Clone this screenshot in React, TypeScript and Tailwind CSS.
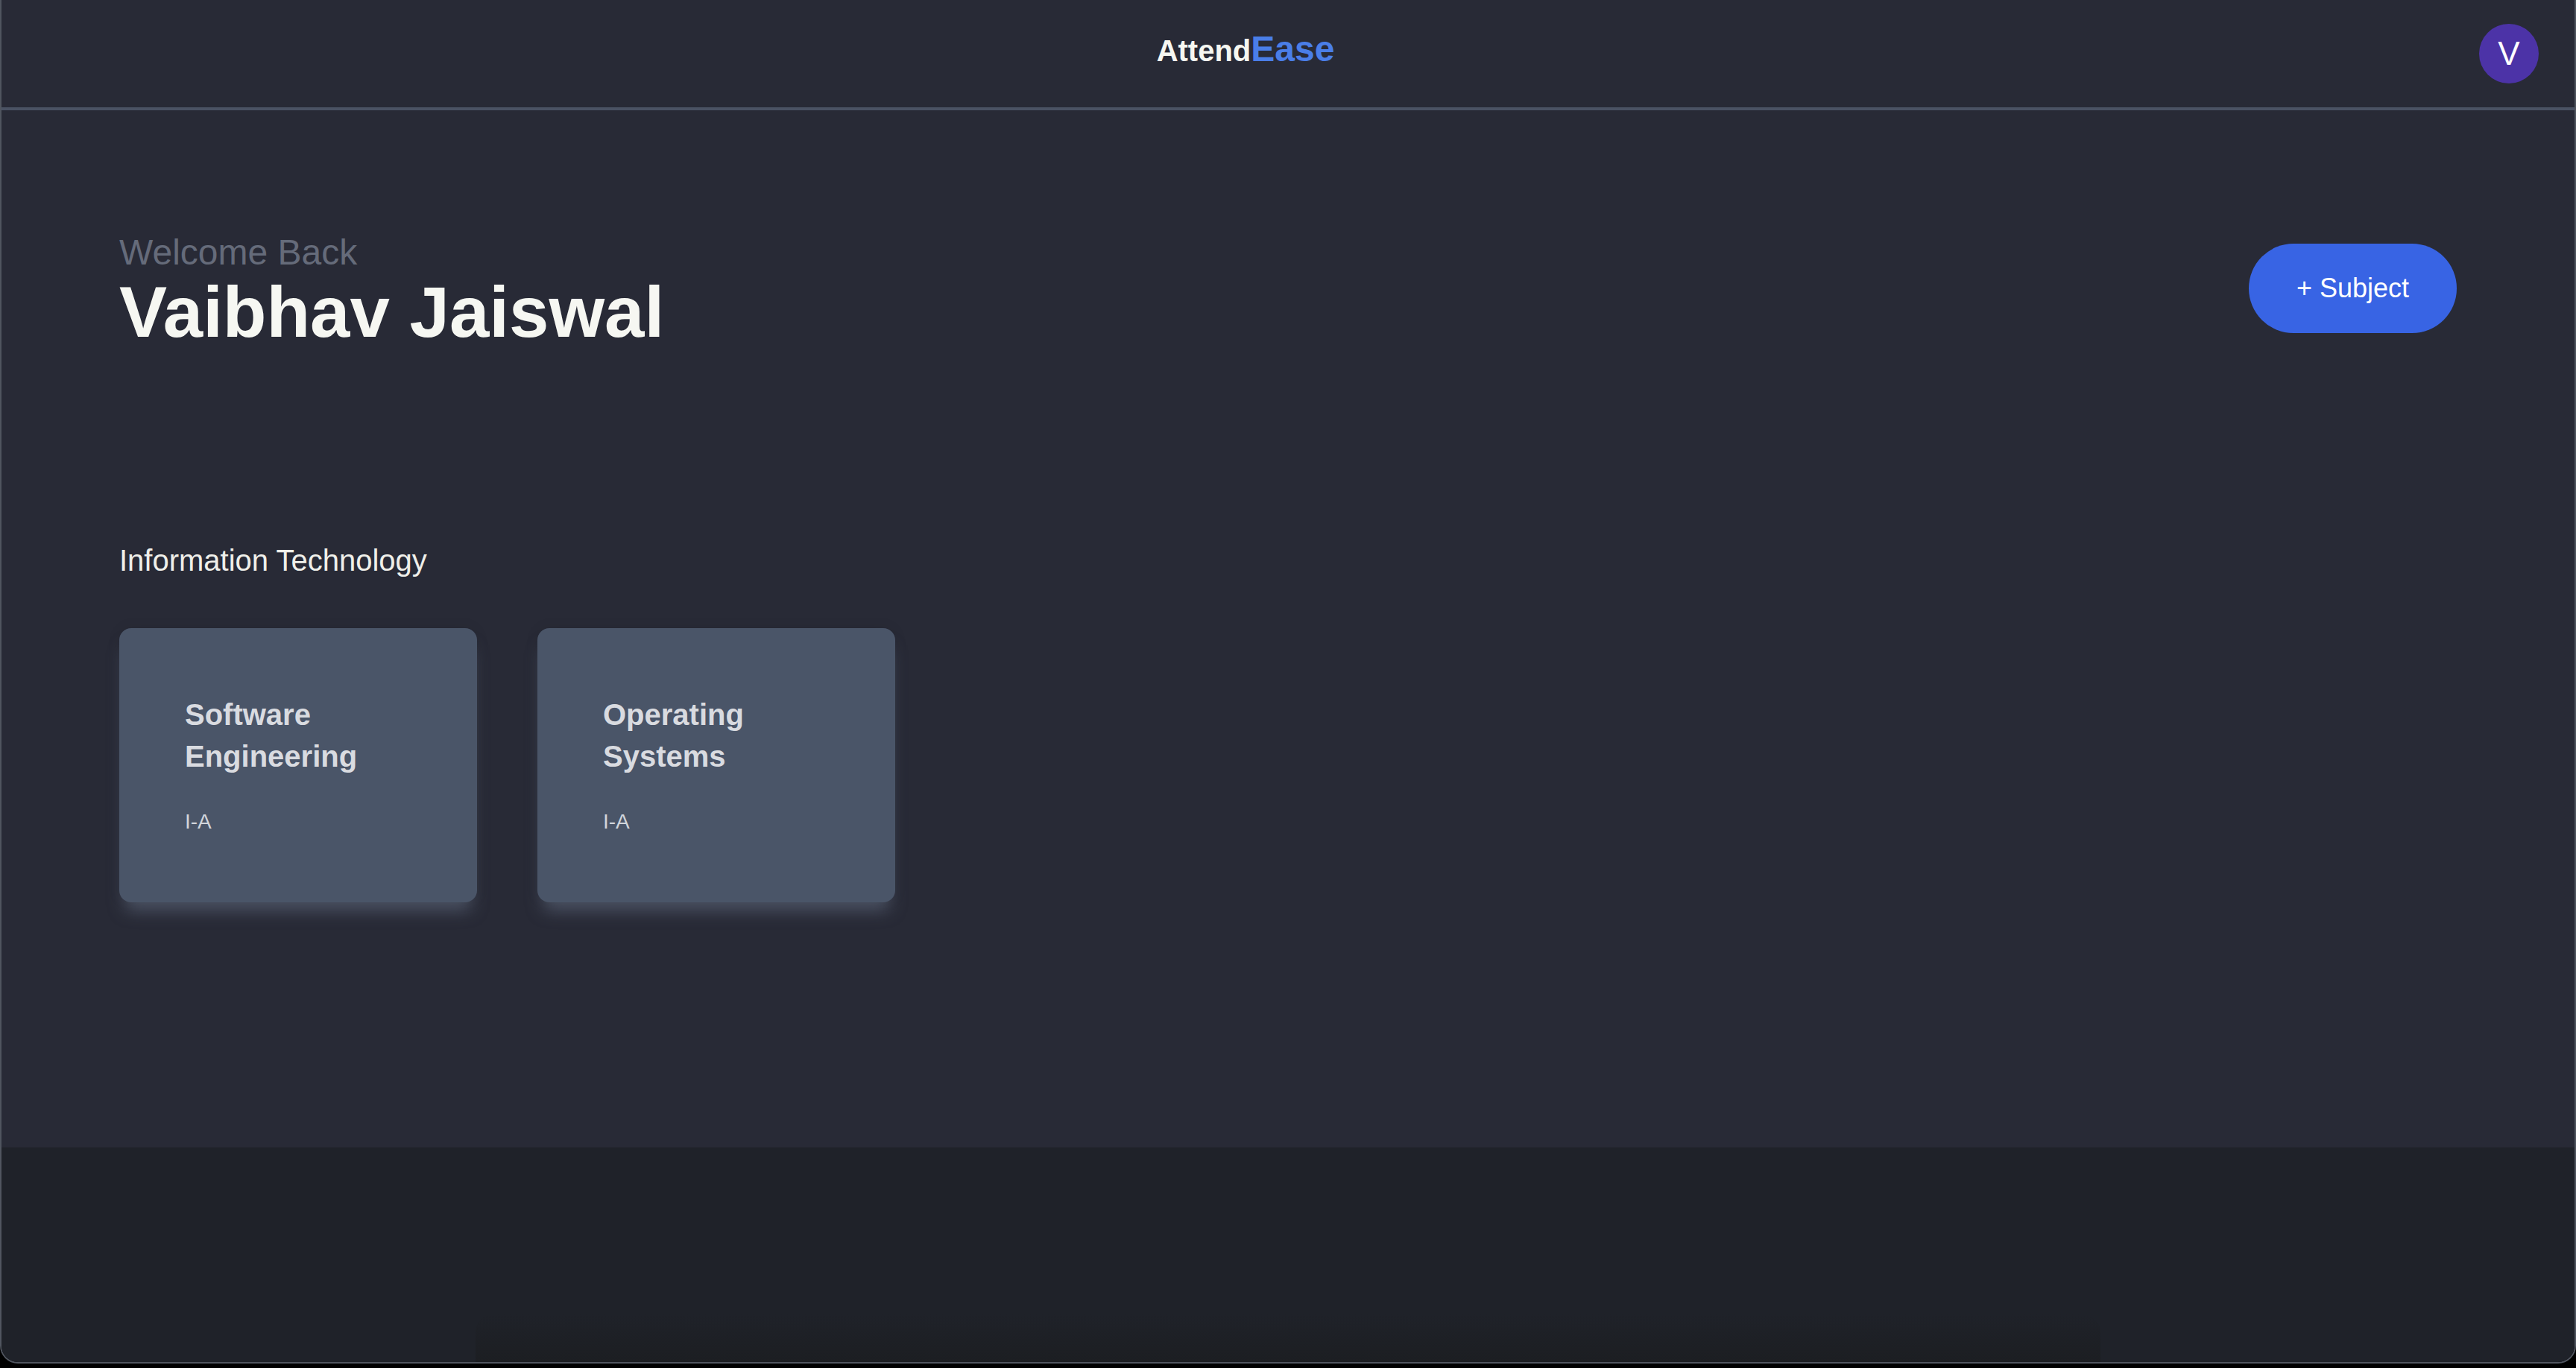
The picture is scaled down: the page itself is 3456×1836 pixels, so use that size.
import React from "react";

type Subject = {
  id: string;
  name: string;
  section: string;
};

const SUBJECTS: Subject[] = [
  { id: "se", name: "Software Engineering", section: "I-A" },
  { id: "os", name: "Operating Systems", section: "I-A" },
];

function Header() {
  return (
    <header className="h-[148px] shrink-0 flex items-center px-[48px] border-b-4 border-[#4a5263] bg-[#282a36]">
      <div className="flex-1" />
      {/* logo sits a little left of centre in the reference */}
      <div className="mr-[114px] mb-[13px] flex items-baseline font-bold">
        <span className="text-[40px] leading-none text-[#f6f7f1]">Attend</span>
        <span className="text-[48px] leading-none text-[#4a7ee8]">Ease</span>
      </div>
      <div className="flex-1 flex justify-end">
        <div className="size-[80px] rounded-full bg-[#4c33a7] flex items-center justify-center text-[44px] leading-none text-white">
          V
        </div>
      </div>
    </header>
  );
}

function SubjectCard({ subject }: { subject: Subject }) {
  return (
    <div className="w-[480px] rounded-[16px] bg-[#4a5568] p-[88px] shadow-[0_0_18px_rgba(0,0,0,0.08),0_18px_22px_-8px_rgba(95,105,125,0.7)]">
      <h3 className="text-[40px] leading-[56px] font-bold text-[#d9dbe0]">
        {subject.name}
      </h3>
      <p className="mt-[40px] text-[28px] leading-[40px] text-[#d2d5db]">
        {subject.section}
      </p>
    </div>
  );
}

export default function App() {
  return (
    <div className="w-[3456px] h-[1836px] bg-black overflow-hidden font-['Liberation_Sans',Arial,sans-serif]">
      <div className="h-[1830px] flex flex-col border-x-2 border-b-2 border-[#50555f] rounded-b-[24px] overflow-hidden">
        <Header />

        <main className="h-[1392px] shrink-0 bg-[#282a36] pl-[158px] pr-[160px] pt-[159px]">
          <div className="flex items-center justify-between">
            <div>
              <p className="text-[48px] leading-[64px] text-[#656b7a]">
                Welcome Back
              </p>
              <h1 className="text-[96px] leading-none font-bold text-[#f6f7f2]">
                Vaibhav Jaiswal
              </h1>
            </div>
            <button className="mr-[-2px] rounded-full bg-[#3864e4] px-[64px] py-[32px] text-[36px] leading-[56px] text-white">
              + Subject
            </button>
          </div>

          <section className="mt-[257px]">
            <h2 className="text-[40px] leading-[56px] text-[#efefea]">
              Information Technology
            </h2>
            <div className="mt-[63px] flex gap-[81px]">
              {SUBJECTS.map((s) => (
                <SubjectCard key={s.id} subject={s} />
              ))}
            </div>
          </section>
        </main>

        <footer className="flex-1 bg-[#1f2229] flex flex-col justify-end">
          {/* faint dock shadow at the bottom of the window */}
          <div className="mx-auto w-[2180px] h-[64px] rounded-t-[24px] bg-gradient-to-b from-[#1f2229] to-[#1c1e22]" />
        </footer>
      </div>
    </div>
  );
}
